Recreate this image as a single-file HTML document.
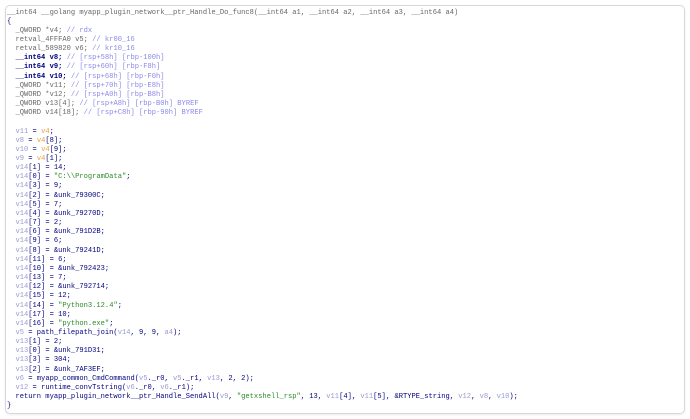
<!DOCTYPE html>
<html><head><meta charset="utf-8"><style>
html,body{margin:0;padding:0;background:#fff;width:690px;height:419px;overflow:hidden}
.box{position:absolute;left:5px;top:5px;width:678px;height:407px;border:1px solid #d8d8d8;border-radius:5px;box-shadow:0 1px 2px rgba(0,0,0,.08)}
pre{position:absolute;left:7px;top:8.5px;margin:0;font-family:"Liberation Mono",monospace;font-size:7.1px;line-height:9.16px;color:#000080;white-space:pre}
.g{color:#666}
.c{color:#8a8ae8}
.v{color:#9a9ad0}
.o{color:#e8a040}
.s{color:#2a8a2a}
.k{color:#000080;font-weight:bold}
</style></head><body>
<div class="box"></div>
<pre><span class="g">__int64 __golang myapp_plugin_network__ptr_Handle_Do_func8(__int64 a1, __int64 a2, __int64 a3, __int64 a4)</span>
{
<span class="g">  _QWORD *v4;</span> <span class="c">// rdx</span>
<span class="g">  retval_4FFFA0 v5;</span> <span class="c">// kr00_16</span>
<span class="g">  retval_589820 v6;</span> <span class="c">// kr10_16</span>
  <span class="k">__int64 v8;</span> <span class="c">// [rsp+58h] [rbp-100h]</span>
  <span class="k">__int64 v9;</span> <span class="c">// [rsp+60h] [rbp-F8h]</span>
  <span class="k">__int64 v10;</span> <span class="c">// [rsp+68h] [rbp-F0h]</span>
<span class="g">  _QWORD *v11;</span> <span class="c">// [rsp+70h] [rbp-E8h]</span>
<span class="g">  _QWORD *v12;</span> <span class="c">// [rsp+A0h] [rbp-B8h]</span>
<span class="g">  _QWORD v13[4];</span> <span class="c">// [rsp+A8h] [rbp-B0h] BYREF</span>
<span class="g">  _QWORD v14[18];</span> <span class="c">// [rsp+C8h] [rbp-90h] BYREF</span>

  <span class="v">v11</span> = <span class="o">v4</span>;
  <span class="v">v8</span> = <span class="o">v4</span>[8];
  <span class="v">v10</span> = <span class="o">v4</span>[9];
  <span class="v">v9</span> = <span class="o">v4</span>[1];
  <span class="v">v14</span>[1] = 14;
  <span class="v">v14</span>[0] = <span class="s">"C:\\ProgramData"</span>;
  <span class="v">v14</span>[3] = 9;
  <span class="v">v14</span>[2] = &amp;unk_79300C;
  <span class="v">v14</span>[5] = 7;
  <span class="v">v14</span>[4] = &amp;unk_79270D;
  <span class="v">v14</span>[7] = 2;
  <span class="v">v14</span>[6] = &amp;unk_791D2B;
  <span class="v">v14</span>[9] = 6;
  <span class="v">v14</span>[8] = &amp;unk_79241D;
  <span class="v">v14</span>[11] = 6;
  <span class="v">v14</span>[10] = &amp;unk_792423;
  <span class="v">v14</span>[13] = 7;
  <span class="v">v14</span>[12] = &amp;unk_792714;
  <span class="v">v14</span>[15] = 12;
  <span class="v">v14</span>[14] = <span class="s">"Python3.12.4"</span>;
  <span class="v">v14</span>[17] = 10;
  <span class="v">v14</span>[16] = <span class="s">"python.exe"</span>;
  <span class="v">v5</span> = path_filepath_join(<span class="v">v14</span>, 9, 9, <span class="v">a4</span>);
  <span class="v">v13</span>[1] = 2;
  <span class="v">v13</span>[0] = &amp;unk_791D31;
  <span class="v">v13</span>[3] = 304;
  <span class="v">v13</span>[2] = &amp;unk_7AF3EF;
  <span class="v">v6</span> = myapp_common_CmdCommand(<span class="v">v5</span>._r0, <span class="v">v5</span>._r1, <span class="v">v13</span>, 2, 2);
  <span class="v">v12</span> = runtime_convTstring(<span class="v">v6</span>._r0, <span class="v">v6</span>._r1);
  return myapp_plugin_network__ptr_Handle_SendAll(<span class="v">v9</span>, <span class="s">"getxshell_rsp"</span>, 13, <span class="v">v11</span>[4], <span class="v">v11</span>[5], &amp;RTYPE_string, <span class="v">v12</span>, <span class="v">v8</span>, <span class="v">v10</span>);
}</pre>
</body></html>
